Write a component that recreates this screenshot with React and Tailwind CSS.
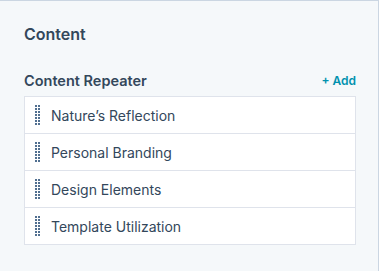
import React from "react";

const items = ["Nature’s Reflection", "Personal Branding", "Design Elements", "Template Utilization"];

function Handle() {
  return (
    <div className="grid grid-cols-2 gap-x-[1px] gap-y-[1px] w-[5px]">
      {Array.from({ length: 14 }).map((_, i) => (
        <div key={i} className="w-[2px] h-[2px] bg-[#516f90]" />
      ))}
    </div>
  );
}

export default function App() {
  return (
    <div
      className="w-[379px] h-[271px] bg-[#f5f8fa] border-t border-r border-[#cbd6e2] pl-6 pr-[22px] pt-[22px] text-[#33475b]"
      style={{ fontFamily: "Inter, 'Noto Sans', sans-serif" }}
    >
      <h2 className="text-[16px] font-semibold leading-[22px]">Content</h2>
      <div className="mt-[26px] flex items-center justify-between h-[20px]">
        <span className="text-[14.5px] font-semibold">Content Repeater</span>
        <span className="text-[12px] font-semibold text-[#0091ae]">+ Add</span>
      </div>
      <div className="mt-[5px] border border-[#dfe3eb] bg-white">
        {items.map((t, i) => (
          <div
            key={t}
            className={`flex items-center pl-[10px] ${i > 0 ? "h-[37px] border-t border-[#dfe3eb]" : "h-[36px]"}`}
          >
            <Handle />
            <span className="ml-[11px] text-[14px] font-normal">{t}</span>
          </div>
        ))}
      </div>
    </div>
  );
}
